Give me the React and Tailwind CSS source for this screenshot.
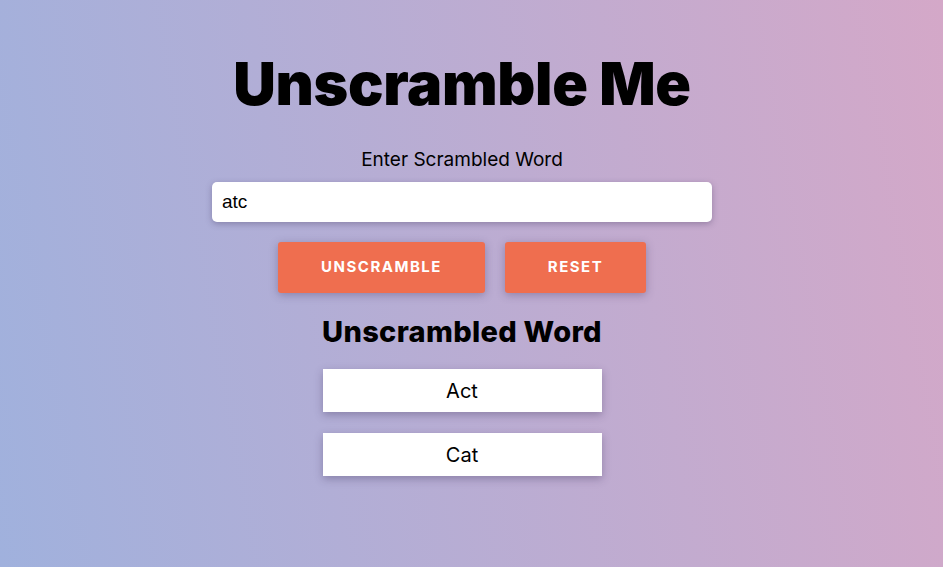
import { useState } from 'react';

const App = () => {
  const [word, setWord] = useState('atc');
  const results = ['Act', 'Cat'];

  return (
    <div className="min-h-screen w-full bg-[linear-gradient(80deg,#a0b1dd,#d4a8c8)] font-['Inter',sans-serif] text-black">
      <div className="flex flex-col items-center pt-[44px] pr-[19px]">
        <h1 className="text-[59px] leading-[80px] font-black tracking-[-0.3px]">
          Unscramble Me
        </h1>
        <label className="mt-[24px] text-[19px] leading-[24px]">Enter Scrambled Word</label>
        <input
          value={word}
          onChange={(e) => setWord(e.target.value)}
          className="mt-[10px] w-[500px] h-[40px] rounded-[5px] bg-white px-[10px] text-[19px] font-['Liberation_Sans',sans-serif] shadow-[0_2px_6px_rgba(60,50,90,0.35)] outline-none"
        />
        <div className="mt-[20px] flex gap-[20px]">
          <button className="w-[207px] h-[51px] rounded-[3px] bg-[#ef6e4f] text-white text-[15px] font-bold tracking-[1.5px] shadow-[0_2px_8px_rgba(60,50,90,0.35)]">
            UNSCRAMBLE
          </button>
          <button className="w-[141px] h-[51px] rounded-[3px] bg-[#ef6e4f] text-white text-[15px] font-bold tracking-[1.5px] shadow-[0_2px_8px_rgba(60,50,90,0.35)]">
            RESET
          </button>
        </div>
        <h2 className="mt-[19px] text-[29px] leading-[40px] font-extrabold tracking-[0.3px]">Unscrambled Word</h2>
        <div className="mt-[17px] flex flex-col gap-[21px]">
          {results.map((r) => (
            <div
              key={r}
              className="w-[279px] h-[43px] bg-white flex items-center justify-center text-[20px] shadow-[0_3px_8px_rgba(60,50,90,0.35)]"
            >
              {r}
            </div>
          ))}
        </div>
      </div>
    </div>
  );
};

export default App;
